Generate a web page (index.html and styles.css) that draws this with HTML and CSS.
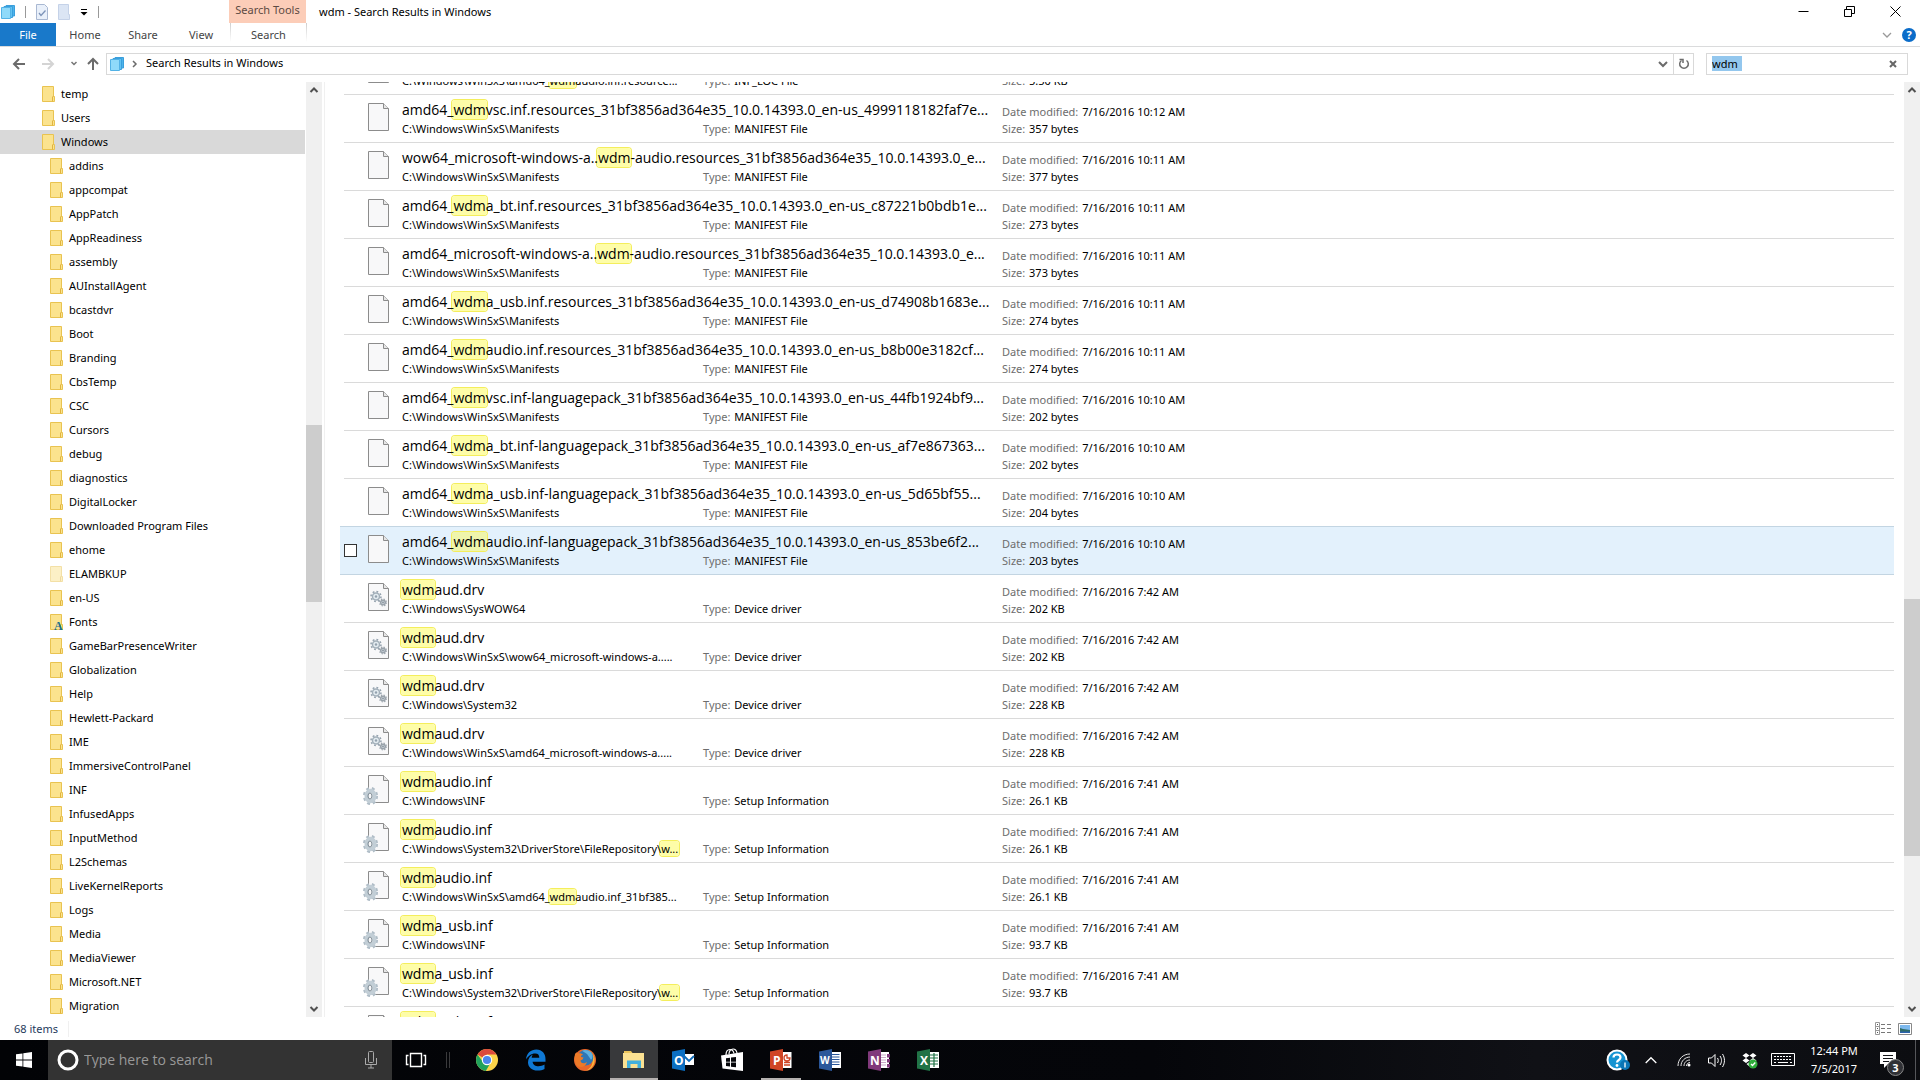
FILE: index.html
```html
<!DOCTYPE html>
<html lang="en">
<head>
    <meta charset="UTF-8">
    <meta name="viewport" content="width=device-width, initial-scale=1.0">
    <title>wdm - Search Results in Windows</title>
    <link rel="stylesheet" href="styles.css">
</head>
<body>
    <svg class="sprite" aria-hidden="true">
        <symbol id="folder" viewBox="0 0 13 16">
            <path d="M.5.5h11v10h1v5H.5z" fill="#fbe38e" stroke="#e9c350"/>
            <path d="M10.500 15.500v-4.500l1-1" fill="none" stroke="#e0b440"/>
        </symbol>
        <symbol id="results" viewBox="0 0 14 14">
            <path d="M5 .5h8.500v10.500H5z" fill="#4db4ea" stroke="#3a9fdc"/>
            <path d="M3 1.500h8.500v11H3z" fill="#62c3f2" stroke="#3a9fdc"/>
            <path d="M.500 2.500h9v11h-9z" fill="#8fdafa" stroke="#52b2e6"/>
        </symbol>
        <symbol id="file" viewBox="0 0 28 32">
            <path d="M6.500.5h15l5 5v22h-20z" fill="#f8f8f9" stroke="#8c8c8c"/>
            <path d="M21.500.5v5h5" fill="#e6e6e6" stroke="#8c8c8c"/>
        </symbol>
        <symbol id="driver" viewBox="0 0 28 32">
            <use href="#file"/>
            <circle cx="14" cy="13.500" r="3.500" fill="#e3ebf0" stroke="#a3b0ba" stroke-width="1.500"/>
            <circle cx="14" cy="13.500" r="5" fill="none" stroke="#93a1ad" stroke-width="1.500" stroke-dasharray="1.800 2.100"/>
            <circle cx="14" cy="13.500" r="1.200" fill="#93a1ad"/>
            <circle cx="21" cy="19.500" r="2.300" fill="#d5dde4" stroke="#9aa3ab" stroke-width="1.500"/>
            <circle cx="21" cy="19.500" r="3.400" fill="none" stroke="#9aa3ab" stroke-width="1.200" stroke-dasharray="1.300 1.400"/>
            <circle cx="21" cy="19.500" r=".9" fill="#87919a"/>
        </symbol>
        <symbol id="setup" viewBox="0 0 28 32">
            <use href="#file"/>
            <ellipse cx="8.500" cy="21" rx="6" ry="7.600" fill="none" stroke="#b0bdc7" stroke-width="3" stroke-dasharray="2.800 2.700"/>
            <ellipse cx="8.500" cy="21" rx="4" ry="5.200" fill="#fff" stroke="#c2ced6" stroke-width="4"/>
            <ellipse cx="8" cy="21" rx="2" ry="3" fill="#f8f8f9" stroke="#77858f"/>
        </symbol>
        <symbol id="up" viewBox="0 0 16 16"><path d="M4.500 10 8 6.500l3.500 3.500" fill="none" stroke="#505050" stroke-width="2"/></symbol>
        <symbol id="down" viewBox="0 0 16 16"><path d="M4.500 6 8 9.500 11.500 6" fill="none" stroke="#505050" stroke-width="2"/></symbol>
    </svg>

    <header class="titlebar">
        <div class="quick">
            <svg width="14" height="14"><use href="#results"/></svg>
            <span class="sep"></span>
            <button aria-label="Properties"><svg width="12" height="16" viewBox="0 0 12 16"><path d="M.5.5h8l3 3v12H.5z" fill="#e9f0fa" stroke="#a9b8d2"/><path d="m3 9 2 2.500 4.500-5" fill="none" stroke="#7d93b8" stroke-width="1.300"/></svg></button>
            <button aria-label="New folder"><svg width="12" height="16" viewBox="0 0 12 16"><path d="M.5.5h10v10h1v5H.5z" fill="#dbe5f4" stroke="#c5d2e8"/></svg></button>
            <button aria-label="Customize"><svg width="8" height="8" viewBox="0 0 8 8"><path d="M1 1.500h6" stroke="#000"/><path d="M.5 4h7L4 7.500z"/></svg></button>
            <span class="sep"></span>
        </div>
        <div class="context">Search Tools</div>
        <h1>wdm - Search Results in Windows</h1>
        <div class="window-buttons">
            <button aria-label="Minimize"><svg width="11" height="11" viewBox="0 0 11 11"><path d="M.5 5.500h10" stroke="#000"/></svg></button>
            <button aria-label="Restore"><svg width="11" height="11" viewBox="0 0 11 11"><path d="M.5 3.500h7v7h-7zM2.500 3V.5h8v7H8" fill="none" stroke="#000"/></svg></button>
            <button aria-label="Close"><svg width="11" height="11" viewBox="0 0 11 11"><path d="m.5.5 10 10m0-10-10 10" stroke="#000"/></svg></button>
        </div>
    </header>

    <nav class="tabs">
        <button class="file-tab">File</button>
        <button>Home</button>
        <button>Share</button>
        <button>View</button>
        <button class="search-tab">Search</button>
        <div class="tabs-right">
            <button aria-label="Expand the Ribbon"><svg width="10" height="10" viewBox="0 0 10 10"><path d="m1 3 4 4 4-4" fill="none" stroke="#999" stroke-width="1.300"/></svg></button>
            <button class="help" aria-label="Help">?</button>
        </div>
    </nav>

    <div class="navbar">
        <div class="arrows">
            <button aria-label="Back"><svg width="14" height="14" viewBox="0 0 14 14"><path d="M13 7H2m5-5L2 7l5 5" fill="none" stroke="#6b6b6b" stroke-width="2"/></svg></button>
            <button aria-label="Forward"><svg width="14" height="14" viewBox="0 0 14 14"><path d="M1 7h11M7 2l5 5-5 5" fill="none" stroke="#d4d4d4" stroke-width="2"/></svg></button>
            <button aria-label="Recent locations"><svg width="8" height="8" viewBox="0 0 8 8"><path d="m1.500 2 2.500 2.500L6.500 2" fill="none" stroke="#777" stroke-width="1.500"/></svg></button>
            <button aria-label="Up"><svg width="14" height="14" viewBox="0 0 14 14"><path d="M7 13V2M2 7l5-5 5 5" fill="none" stroke="#6b6b6b" stroke-width="2"/></svg></button>
        </div>
        <div class="address">
            <svg width="14" height="14"><use href="#results"/></svg>
            <svg class="crumb-arrow" width="6" height="8" viewBox="0 0 6 8"><path d="m1 1 3 3-3 3" fill="none" stroke="#6b6b6b" stroke-width="1.500"/></svg>
            <button class="crumb">Search Results in Windows</button>
            <button class="history" aria-label="Previous locations"><svg width="10" height="10" viewBox="0 0 10 10"><path d="m1 3 4 4 4-4" fill="none" stroke="#6b6b6b" stroke-width="2"/></svg></button>
            <button class="refresh" aria-label="Refresh"><svg width="12" height="12" viewBox="0 0 12 12"><path d="M3.500 2.500A4.300 4.300 0 1 0 8.500 2.500" fill="none" stroke="#6b6b6b" stroke-width="1.500"/><path d="M1.500 1.500h3.500V5" fill="none" stroke="#6b6b6b" stroke-width="1.500"/></svg></button>
        </div>
        <div class="search-box">
            <input type="text" value="wdm" aria-label="Search Windows">
            <button aria-label="Clear"><svg width="8" height="8" viewBox="0 0 8 8"><path d="m1 1 6 6m0-6L1 7" stroke="#666" stroke-width="2"/></svg></button>
        </div>
    </div>

    <main class="panes">
        <ul class="tree">
            <li class="top"><svg><use href="#folder"/></svg>temp</li>
            <li class="top"><svg><use href="#folder"/></svg>Users</li>
            <li class="top current"><svg><use href="#folder"/></svg>Windows</li>
            <li><svg><use href="#folder"/></svg>addins</li>
            <li><svg><use href="#folder"/></svg>appcompat</li>
            <li><svg><use href="#folder"/></svg>AppPatch</li>
            <li><svg><use href="#folder"/></svg>AppReadiness</li>
            <li><svg><use href="#folder"/></svg>assembly</li>
            <li><svg><use href="#folder"/></svg>AUInstallAgent</li>
            <li><svg><use href="#folder"/></svg>bcastdvr</li>
            <li><svg><use href="#folder"/></svg>Boot</li>
            <li><svg><use href="#folder"/></svg>Branding</li>
            <li><svg><use href="#folder"/></svg>CbsTemp</li>
            <li><svg><use href="#folder"/></svg>CSC</li>
            <li><svg><use href="#folder"/></svg>Cursors</li>
            <li><svg><use href="#folder"/></svg>debug</li>
            <li><svg><use href="#folder"/></svg>diagnostics</li>
            <li><svg><use href="#folder"/></svg>DigitalLocker</li>
            <li><svg><use href="#folder"/></svg>Downloaded Program Files</li>
            <li><svg><use href="#folder"/></svg>ehome</li>
            <li class="hidden-folder"><svg><use href="#folder"/></svg>ELAMBKUP</li>
            <li><svg><use href="#folder"/></svg>en-US</li>
            <li><svg><use href="#folder"/><text class="font-mark" x="4" y="16">A</text></svg>Fonts</li>
            <li><svg><use href="#folder"/></svg>GameBarPresenceWriter</li>
            <li><svg><use href="#folder"/></svg>Globalization</li>
            <li><svg><use href="#folder"/></svg>Help</li>
            <li><svg><use href="#folder"/></svg>Hewlett-Packard</li>
            <li><svg><use href="#folder"/></svg>IME</li>
            <li><svg><use href="#folder"/></svg>ImmersiveControlPanel</li>
            <li><svg><use href="#folder"/></svg>INF</li>
            <li><svg><use href="#folder"/></svg>InfusedApps</li>
            <li><svg><use href="#folder"/></svg>InputMethod</li>
            <li><svg><use href="#folder"/></svg>L2Schemas</li>
            <li><svg><use href="#folder"/></svg>LiveKernelReports</li>
            <li><svg><use href="#folder"/></svg>Logs</li>
            <li><svg><use href="#folder"/></svg>Media</li>
            <li><svg><use href="#folder"/></svg>MediaViewer</li>
            <li><svg><use href="#folder"/></svg>Microsoft.NET</li>
            <li><svg><use href="#folder"/></svg>Migration</li>
        </ul>
        <div class="scrollbar tree-scroll">
            <svg><use href="#up"/></svg>
            <div class="track"><div class="thumb"></div></div>
            <svg><use href="#down"/></svg>
        </div>

        <ul class="results">
            <li>
                <svg><use href="#file"/></svg>
                <div class="info"><b>amd64_<mark>wdm</mark>audio.inf.resources</b><p>C:\Windows\WinSxS\amd64_<mark>wdm</mark>audio.inf.resource...</p><p><i>Type:</i> INF_LOC File</p></div>
                <div class="meta"><p><i>Date modified:</i> 7/16/2016 10:12 AM</p><p><i>Size:</i> 5.50 KB</p></div>
            </li>
            <li>
                <svg><use href="#file"/></svg>
                <div class="info"><b>amd64_<mark>wdm</mark>vsc.inf.resources_31bf3856ad364e35_10.0.14393.0_en-us_4999118182faf7e...</b><p>C:\Windows\WinSxS\Manifests</p><p><i>Type:</i> MANIFEST File</p></div>
                <div class="meta"><p><i>Date modified:</i> 7/16/2016 10:12 AM</p><p><i>Size:</i> 357 bytes</p></div>
            </li>
            <li>
                <svg><use href="#file"/></svg>
                <div class="info"><b>wow64_microsoft-windows-a..<mark>wdm</mark>-audio.resources_31bf3856ad364e35_10.0.14393.0_e...</b><p>C:\Windows\WinSxS\Manifests</p><p><i>Type:</i> MANIFEST File</p></div>
                <div class="meta"><p><i>Date modified:</i> 7/16/2016 10:11 AM</p><p><i>Size:</i> 377 bytes</p></div>
            </li>
            <li>
                <svg><use href="#file"/></svg>
                <div class="info"><b>amd64_<mark>wdm</mark>a_bt.inf.resources_31bf3856ad364e35_10.0.14393.0_en-us_c87221b0bdb1e...</b><p>C:\Windows\WinSxS\Manifests</p><p><i>Type:</i> MANIFEST File</p></div>
                <div class="meta"><p><i>Date modified:</i> 7/16/2016 10:11 AM</p><p><i>Size:</i> 273 bytes</p></div>
            </li>
            <li>
                <svg><use href="#file"/></svg>
                <div class="info"><b>amd64_microsoft-windows-a..<mark>wdm</mark>-audio.resources_31bf3856ad364e35_10.0.14393.0_e...</b><p>C:\Windows\WinSxS\Manifests</p><p><i>Type:</i> MANIFEST File</p></div>
                <div class="meta"><p><i>Date modified:</i> 7/16/2016 10:11 AM</p><p><i>Size:</i> 373 bytes</p></div>
            </li>
            <li>
                <svg><use href="#file"/></svg>
                <div class="info"><b>amd64_<mark>wdm</mark>a_usb.inf.resources_31bf3856ad364e35_10.0.14393.0_en-us_d74908b1683e...</b><p>C:\Windows\WinSxS\Manifests</p><p><i>Type:</i> MANIFEST File</p></div>
                <div class="meta"><p><i>Date modified:</i> 7/16/2016 10:11 AM</p><p><i>Size:</i> 274 bytes</p></div>
            </li>
            <li>
                <svg><use href="#file"/></svg>
                <div class="info"><b>amd64_<mark>wdm</mark>audio.inf.resources_31bf3856ad364e35_10.0.14393.0_en-us_b8b00e3182cf...</b><p>C:\Windows\WinSxS\Manifests</p><p><i>Type:</i> MANIFEST File</p></div>
                <div class="meta"><p><i>Date modified:</i> 7/16/2016 10:11 AM</p><p><i>Size:</i> 274 bytes</p></div>
            </li>
            <li>
                <svg><use href="#file"/></svg>
                <div class="info"><b>amd64_<mark>wdm</mark>vsc.inf-languagepack_31bf3856ad364e35_10.0.14393.0_en-us_44fb1924bf9...</b><p>C:\Windows\WinSxS\Manifests</p><p><i>Type:</i> MANIFEST File</p></div>
                <div class="meta"><p><i>Date modified:</i> 7/16/2016 10:10 AM</p><p><i>Size:</i> 202 bytes</p></div>
            </li>
            <li>
                <svg><use href="#file"/></svg>
                <div class="info"><b>amd64_<mark>wdm</mark>a_bt.inf-languagepack_31bf3856ad364e35_10.0.14393.0_en-us_af7e867363...</b><p>C:\Windows\WinSxS\Manifests</p><p><i>Type:</i> MANIFEST File</p></div>
                <div class="meta"><p><i>Date modified:</i> 7/16/2016 10:10 AM</p><p><i>Size:</i> 202 bytes</p></div>
            </li>
            <li>
                <svg><use href="#file"/></svg>
                <div class="info"><b>amd64_<mark>wdm</mark>a_usb.inf-languagepack_31bf3856ad364e35_10.0.14393.0_en-us_5d65bf55...</b><p>C:\Windows\WinSxS\Manifests</p><p><i>Type:</i> MANIFEST File</p></div>
                <div class="meta"><p><i>Date modified:</i> 7/16/2016 10:10 AM</p><p><i>Size:</i> 204 bytes</p></div>
            </li>
            <li class="hover">
                <input type="checkbox" aria-label="Select item">
                <svg><use href="#file"/></svg>
                <div class="info"><b>amd64_<mark>wdm</mark>audio.inf-languagepack_31bf3856ad364e35_10.0.14393.0_en-us_853be6f2...</b><p>C:\Windows\WinSxS\Manifests</p><p><i>Type:</i> MANIFEST File</p></div>
                <div class="meta"><p><i>Date modified:</i> 7/16/2016 10:10 AM</p><p><i>Size:</i> 203 bytes</p></div>
            </li>
            <li>
                <svg><use href="#driver"/></svg>
                <div class="info"><b><mark>wdm</mark>aud.drv</b><p>C:\Windows\SysWOW64</p><p><i>Type:</i> Device driver</p></div>
                <div class="meta"><p><i>Date modified:</i> 7/16/2016 7:42 AM</p><p><i>Size:</i> 202 KB</p></div>
            </li>
            <li>
                <svg><use href="#driver"/></svg>
                <div class="info"><b><mark>wdm</mark>aud.drv</b><p>C:\Windows\WinSxS\wow64_microsoft-windows-a.....</p><p><i>Type:</i> Device driver</p></div>
                <div class="meta"><p><i>Date modified:</i> 7/16/2016 7:42 AM</p><p><i>Size:</i> 202 KB</p></div>
            </li>
            <li>
                <svg><use href="#driver"/></svg>
                <div class="info"><b><mark>wdm</mark>aud.drv</b><p>C:\Windows\System32</p><p><i>Type:</i> Device driver</p></div>
                <div class="meta"><p><i>Date modified:</i> 7/16/2016 7:42 AM</p><p><i>Size:</i> 228 KB</p></div>
            </li>
            <li>
                <svg><use href="#driver"/></svg>
                <div class="info"><b><mark>wdm</mark>aud.drv</b><p>C:\Windows\WinSxS\amd64_microsoft-windows-a.....</p><p><i>Type:</i> Device driver</p></div>
                <div class="meta"><p><i>Date modified:</i> 7/16/2016 7:42 AM</p><p><i>Size:</i> 228 KB</p></div>
            </li>
            <li>
                <svg><use href="#setup"/></svg>
                <div class="info"><b><mark>wdm</mark>audio.inf</b><p>C:\Windows\INF</p><p><i>Type:</i> Setup Information</p></div>
                <div class="meta"><p><i>Date modified:</i> 7/16/2016 7:41 AM</p><p><i>Size:</i> 26.1 KB</p></div>
            </li>
            <li>
                <svg><use href="#setup"/></svg>
                <div class="info"><b><mark>wdm</mark>audio.inf</b><p>C:\Windows\System32\DriverStore\FileRepository\<mark>w...</mark></p><p><i>Type:</i> Setup Information</p></div>
                <div class="meta"><p><i>Date modified:</i> 7/16/2016 7:41 AM</p><p><i>Size:</i> 26.1 KB</p></div>
            </li>
            <li>
                <svg><use href="#setup"/></svg>
                <div class="info"><b><mark>wdm</mark>audio.inf</b><p>C:\Windows\WinSxS\amd64_<mark>wdm</mark>audio.inf_31bf385...</p><p><i>Type:</i> Setup Information</p></div>
                <div class="meta"><p><i>Date modified:</i> 7/16/2016 7:41 AM</p><p><i>Size:</i> 26.1 KB</p></div>
            </li>
            <li>
                <svg><use href="#setup"/></svg>
                <div class="info"><b><mark>wdm</mark>a_usb.inf</b><p>C:\Windows\INF</p><p><i>Type:</i> Setup Information</p></div>
                <div class="meta"><p><i>Date modified:</i> 7/16/2016 7:41 AM</p><p><i>Size:</i> 93.7 KB</p></div>
            </li>
            <li>
                <svg><use href="#setup"/></svg>
                <div class="info"><b><mark>wdm</mark>a_usb.inf</b><p>C:\Windows\System32\DriverStore\FileRepository\<mark>w...</mark></p><p><i>Type:</i> Setup Information</p></div>
                <div class="meta"><p><i>Date modified:</i> 7/16/2016 7:41 AM</p><p><i>Size:</i> 93.7 KB</p></div>
            </li>
            <li>
                <svg><use href="#setup"/></svg>
                <div class="info"><b><mark>wdm</mark>audio.inf</b></div>
            </li>
        </ul>
        <div class="scrollbar list-scroll">
            <svg><use href="#up"/></svg>
            <div class="track"><div class="thumb"></div></div>
            <svg><use href="#down"/></svg>
        </div>
    </main>

    <footer class="statusbar">
        <span class="count">68 items</span>
        <div class="views">
            <button aria-label="Details"><svg width="16" height="13" viewBox="0 0 16 13"><path d="M.5.5h4v12h-4zM.5 4.500h4m-4 4h4" fill="none" stroke="#999"/><path d="M2 2.500h1m-1 4h1m-1 4h1" stroke="#555"/><path d="M6 2.500h4m2 0h4m-10 4h4m2 0h4m-10 4h4m2 0h4" stroke="#777"/></svg></button>
            <button aria-label="Large icons"><svg width="14" height="12" viewBox="0 0 14 12"><path d="M.5.5h13v11H.5z" fill="#fff" stroke="#888"/><path d="M2 2h10v8H2z" fill="#7db9ee"/><path d="m2 5 3 1 7 1v3H2z" fill="#2f6b66"/><path d="M2 8.500h10V10H2z" fill="#2b62ad"/></svg></button>
        </div>
    </footer>

    <div class="taskbar">
        <button class="start" aria-label="Start"><svg width="16" height="16" viewBox="0 0 16 16"><path d="m0 2.300 6.500-.9v6.200H0zm7.300-1L16 0v7.600H7.300zM0 8.400h6.500v6.200L0 13.700zm7.300 0H16V16l-8.700-1.200z" fill="#fff"/></svg></button>
        <div class="cortana">
            <svg width="22" height="22" viewBox="0 0 22 22"><circle cx="11" cy="11" r="9" fill="none" stroke="#fff" stroke-width="3"/></svg>
            <input type="text" placeholder="Type here to search" aria-label="Type here to search">
            <button aria-label="Microphone"><svg width="12" height="18" viewBox="0 0 12 18"><rect x="3.500" y=".5" width="5" height="11" rx="1" fill="none" stroke="#aaa"/><path d="M.500 7v6.500h11V7M6 14v3M3 17h6" fill="none" stroke="#aaa"/></svg></button>
        </div>
        <button class="task-view" aria-label="Task View"><svg width="22" height="16" viewBox="0 0 22 16"><path d="M5.500 1.500h11v13h-11zM3.500 3.500h-2v9h2m15-9h2v9h-2" fill="none" stroke="#fff" stroke-width="1.400"/></svg></button>
        <span class="grip"></span>
        <div class="apps">
            <button aria-label="Chrome"><svg width="22" height="22" viewBox="0 0 22 22"><circle cx="11" cy="11" r="11" fill="#fcd349"/><path d="M11 11 1.500 5.500a11 11 0 0 1 19 0H11z" fill="#dc4a3d"/><path d="M1.500 5.500a11 11 0 0 0 8.300 16.400L15 13H7z" fill="#20a25c"/><circle cx="11" cy="11" r="5.200" fill="#fff"/><circle cx="11" cy="11" r="4.100" fill="#4a86ee"/></svg></button>
            <button aria-label="Edge"><svg width="22" height="22" viewBox="0 0 22 22"><path d="M1 10.500C1.500 4 6 .5 11.300.5c6 0 9.200 4.300 9.200 9.500v2.700H7.600c.2 3.200 3 4.500 5.900 4.500 2.200 0 4.200-.6 6-1.600v4.300c-2 1-4.300 1.600-6.800 1.600-5.800 0-9.700-3.200-9.700-8.300 0-3.500 2-6.200 5-7.700-1 1-1.200 2.300-1.300 3.200h7.600c0-2.500-1.200-4.100-4-4.100C6 4.600 3 7.300 1 10.500z" fill="#0f78d4"/></svg></button>
            <button aria-label="Firefox"><svg width="22" height="22" viewBox="0 0 22 22"><circle cx="11" cy="11" r="11" fill="#e8672a"/><path d="M14 1a11 11 0 0 1-3 21c5-2 8-6 7.500-11C18.300 7 17 4 14 1z" fill="#f9b83a"/><circle cx="11.500" cy="8.800" r="7.800" fill="#2f77b5"/><path d="M8 1.700c4-1.500 8 0 10 3 1 2 .5 5-1 6L13 5z" fill="#5fb0de"/><path d="M1 5c1.500-2 2-2 3-.5 2-.8 4 0 5 1-1.500.5-2 1.500-2 2.500l2.500.5-1 2-2 1c0 2.500 3 4 6.500 1.500-1 4-5 6-9 4.500C1 15.500 0 10 1 5z" fill="#ec7a28"/></svg></button>
            <button class="open active" aria-label="File Explorer"><svg width="22" height="20" viewBox="0 0 22 20"><path d="M1 1h7l1.500 2H20v4H1z" fill="#ecc55b"/><path d="M0 3h21v15H0z" fill="#fbe192"/><path d="M4 10.500h14V18h-3.500v-4h-7v4H4z" fill="#43b0dc"/></svg></button>
            <button aria-label="Outlook"><svg width="24" height="24" viewBox="0 0 24 24"><path d="M12 6h11v11H12z" fill="#fff"/><path d="m13 8 5 5 5-5" fill="none" stroke="#0d6ab8" stroke-width="1.800"/><path d="M1 3.500 14 1v22L1 20.500z" fill="#0b6fc2"/><text x="3" y="17">O</text></svg></button>
            <button aria-label="Store"><svg width="22" height="24" viewBox="0 0 22 24"><path d="M0 7.500 22 4v19L1.500 20.500z" fill="#fff"/><path d="M5 7c0-3 1.500-5.500 4-5.500 2 0 3.500 1.500 4 4M8 6c0-3 2-5 4-5s3.500 1.500 4 4" fill="none" stroke="#fff" stroke-width="1.200"/><path d="m5 10.300 4-.6v4H5zm5-.7 5-.7v4.800h-5zM5 14.600h4v4l-4-.5zm5 0h5v4.700l-5-.6z" fill="#05060a"/></svg></button>
            <button class="open" aria-label="PowerPoint"><svg width="24" height="24" viewBox="0 0 24 24"><path d="M12 4h10.500v16H12z" fill="#fff"/><path d="M18 7a3 3 0 1 0 3 3h-3zM15 14.500h6m-6 2.500h6" fill="none" stroke="#d04525" stroke-width="1.300"/><path d="M1 3.500 14 1v22L1 20.500z" fill="#d04525"/><text x="4" y="17">P</text></svg></button>
            <button aria-label="Word"><svg width="24" height="24" viewBox="0 0 24 24"><path d="M12 4h11v16H12z" fill="#fff"/><path d="M14 6.500h7.500M14 9h7.500M14 11.500h7.500M14 14h7.500m-7.500 2.500h7.500" stroke="#2b579a" stroke-width="1.200"/><path d="M1 3.500 14 1v22L1 20.500z" fill="#2b579a"/><text class="wide" x="2" y="16">W</text></svg></button>
            <button aria-label="OneNote"><svg width="24" height="24" viewBox="0 0 24 24"><path d="M12 4h10v16H12z" fill="#fff"/><path d="M20 6h3v3.500h-3zm0 5h3v3.500h-3zm0 5h3v3.500h-3z" fill="#80397b"/><path d="M14 7h5m-5 2.500h5M14 12h5m-5 2.500h5M14 17h5" stroke="#c9a9c7"/><path d="M1 3.500 14 1v22L1 20.500z" fill="#80397b"/><text x="3" y="17">N</text></svg></button>
            <button aria-label="Excel"><svg width="24" height="24" viewBox="0 0 24 24"><path d="M12 4h11v16H12z" fill="#fff"/><path d="M14 7h8m-8 3h8m-8 3h8m-8 3h8M18 5v14" stroke="#217346" stroke-width="1.200"/><path d="M1 3.500 14 1v22L1 20.500z" fill="#217346"/><text x="4" y="17">X</text></svg></button>
        </div>
        <div class="tray">
            <button aria-label="Support Assistant"><svg width="24" height="24" viewBox="0 0 24 24"><circle cx="11" cy="12" r="9.500" fill="#1694d2" stroke="#fff" stroke-width="2"/><path d="M7.500 9.500C7.500 7.500 9 6.500 11 6.500s3.500 1 3.500 3c0 2.500-3.500 2.500-3.500 5" fill="none" stroke="#fff" stroke-width="2.200"/><circle cx="11" cy="17.500" r="1.400" fill="#fff"/><circle cx="19" cy="17" r="5" fill="#0b75b5"/><path d="M19 14.500v5" stroke="#fff" stroke-width="1.300"/></svg></button>
            <button aria-label="Show hidden icons"><svg width="12" height="8" viewBox="0 0 12 8"><path d="m.7 7 5.300-5.300L11.300 7" fill="none" stroke="#fff" stroke-width="1.300"/></svg></button>
            <button aria-label="Network"><svg width="14" height="14" viewBox="0 0 14 14"><g fill="none" stroke="#e5e5e5"><path d="M1 13C1 6 6 1 13 1M4 13c0-5 4-9 9-9M7 13c0-3.500 2.500-6 6-6"/><path d="M9.500 13c0-2 1.500-3.500 3.500-3.500"/></g><circle cx="12" cy="12" r="1.500" fill="#fff"/></svg></button>
            <button aria-label="Volume"><svg width="17" height="15" viewBox="0 0 17 15"><path d="M.5 5h3L7 1.500v12L3.500 10h-3zM9.500 5c1 1.500 1 3.500 0 5m2.500-7c2 3 2 6 0 9m2.500-11c2.600 4 2.600 9 0 13" fill="none" stroke="#fff"/></svg></button>
            <button aria-label="Dropbox"><svg width="16" height="17" viewBox="0 0 16 17"><path d="m4 1 3.500 2.500L4 6 .5 3.500zm7 0 3.500 2.500L11 6 7.500 3.500zM4 6l3.500 2.500L4 11 .5 8.500zm7 0 3.500 2.500L11 11 7.500 8.500zm-3.500 4 3 2-3 2.500-3-2.500z" fill="#fff"/><circle cx="11" cy="12" r="4.500" fill="#2fae3a"/><path d="m9 12 1.500 1.500 2.800-3" fill="none" stroke="#fff" stroke-width="1.300"/></svg></button>
            <button aria-label="Touch keyboard"><svg width="24" height="14" viewBox="0 0 24 14"><path d="M.5.5h23v12H.5z" fill="none" stroke="#fff"/><path d="M3 3.500h18M3 6.500h18" stroke="#fff" stroke-dasharray="2 1"/><path d="M3 9.500h2m2 0h10m2 0h2" stroke="#fff"/></svg></button>
            <button class="clock"><span>12:44 PM</span><span>7/5/2017</span></button>
            <button class="action" aria-label="Action Center"><svg width="16" height="16" viewBox="0 0 16 16"><path d="M0 0h16v12H8l-4 4v-4H0z" fill="#fff"/><path d="M3 3.500h10M3 6.500h10M3 9.500h6" stroke="#14151a"/></svg><span class="badge">3</span></button>
        </div>
    </div>
</body>
</html>
```

FILE: styles.css
```css
* {
    box-sizing: border-box;
}
body {
    margin: 0;
    height: 100vh;
    display: flex;
    flex-direction: column;
    overflow: hidden;
    background: #fff;
    color: #000;
    font-family: "Noto Sans", "Open Sans", sans-serif;
    font-size: 11px;
    line-height: 16px;
}
button, input {
    font: inherit;
    color: inherit;
    background: none;
    border: none;
    padding: 0;
    margin: 0;
    outline: none;
}
button {
    display: flex;
    align-items: center;
    justify-content: center;
}
ul, p, h1 {
    margin: 0;
    padding: 0;
    list-style: none;
    font-size: inherit;
    font-weight: normal;
}
b, i {
    font-weight: normal;
    font-style: normal;
}
svg {
    display: block;
    flex: none;
}
.sprite {
    position: absolute;
    width: 0;
    height: 0;
}

/* title bar */
.titlebar {
    display: flex;
    height: 23px;
    flex: none;
}
.quick {
    width: 229px;
    display: flex;
    align-items: center;
    gap: 10px;
    padding-left: 1px;
}
.sep {
    width: 1px;
    height: 12px;
    background: #999;
}
.context {
    width: 77px;
    background: #fccdb8;
    color: #5c4a42;
    text-align: center;
    line-height: 20px;
}
.titlebar h1 {
    flex: 1;
    padding-left: 13px;
    line-height: 23px;
}
.window-buttons {
    display: flex;
    align-items: center;
    padding-right: 2px;
}
.window-buttons button {
    width: 46px;
    height: 20px;
}

/* ribbon tabs */
.tabs {
    display: flex;
    height: 24px;
    flex: none;
    border-bottom: 1px solid #dadbdc;
    color: #444;
}
.tabs > button {
    width: 58px;
}
.tabs .file-tab {
    width: 56px;
    background: #1979ca;
    color: #fff;
}
.tabs .search-tab {
    width: 77px;
    border: 1px solid;
    border-width: 0 1px;
    border-image: linear-gradient(#ccc, #fff 80%) 1;
}
.tabs-right {
    display: flex;
    align-items: center;
    gap: 10px;
    margin-left: auto;
    padding-right: 4px;
}
.help {
    width: 14px;
    height: 14px;
    border-radius: 50%;
    background: #0a6cc9;
    color: #fff;
    font-weight: bold;
}

/* address row */
.navbar {
    display: flex;
    align-items: flex-start;
    height: 35px;
    flex: none;
    padding: 6px 12px 0 0;
}
.arrows {
    width: 106px;
    height: 22px;
    display: flex;
    align-items: center;
    gap: 15px;
    padding-left: 12px;
}
.arrows button:last-child {
    margin-left: -7px;
}
.address {
    flex: 1;
    display: flex;
    align-items: center;
    height: 22px;
    border: 1px solid #d9d9d9;
    padding-left: 3px;
    margin-right: 12px;
}
.crumb-arrow {
    margin: 0 8px;
}
.crumb {
    padding-bottom: 2px;
}
.history {
    width: 20px;
    height: 20px;
    margin-left: auto;
}
.refresh {
    width: 20px;
    height: 20px;
    border-left: 1px solid #d9d9d9;
}
.search-box {
    display: flex;
    width: 202px;
    height: 22px;
    border: 1px solid #d9d9d9;
    padding: 0 10px 0 5px;
}
.search-box input {
    flex: 1;
    min-width: 0;
    font-size: 11px;
    background: linear-gradient(#93c7ee, #93c7ee) no-repeat 0 2px / 30px 15px;
}

/* panes */
.panes {
    flex: 1;
    min-height: 0;
    display: flex;
}
.tree {
    width: 305px;
    overflow: hidden;
}
.tree li {
    display: flex;
    align-items: center;
    gap: 6px;
    height: 24px;
    padding-left: 50px;
}
.tree svg {
    width: 13px;
    height: 16px;
    overflow: visible;
}
.tree .top {
    padding-left: 42px;
}
.tree .current {
    background: #d9d9d9;
}
.hidden-folder svg {
    opacity: 0.5;
}
.font-mark {
    font: bold 12px "Liberation Serif", serif;
    fill: #1c6f8c;
}
.scrollbar {
    width: 16px;
    display: flex;
    flex-direction: column;
    flex: none;
    background: #f0f0f0;
}
.scrollbar svg {
    width: 16px;
    height: 16px;
}
.track {
    flex: 1;
    display: flex;
    flex-direction: column;
}
.thumb {
    background: #cdcdcd;
}
.tree-scroll {
    margin-left: 1px;
}
.tree-scroll .thumb {
    margin-top: 327px;
    height: 177px;
}
.list-scroll .thumb {
    margin-top: 501px;
    height: 257px;
}

/* search results */
.results {
    flex: 1;
    overflow: hidden;
    margin-left: 2px;
    padding: 0 10px 0 16px;
    border-left: 1px solid #f0f0f0;
}
.results li:first-child {
    margin-top: -35px;
}
.results li {
    display: flex;
    height: 48px;
    margin-left: 3px;
    padding-left: 18px;
    border-bottom: 1px solid #dadada;
}
.results li > svg {
    width: 28px;
    height: 32px;
    margin: 8px 12px 0 0;
}
.results .hover {
    position: relative;
    margin-left: -1px;
    padding-left: 4px;
    background: #e3f1fc;
    border-bottom-color: #c3d5e2;
    box-shadow: 0 -1px #c3d5e2;
}
.hover input {
    appearance: none;
    width: 13px;
    height: 13px;
    margin: 17px 5px 0 0;
    border: 1px solid #333;
    background: #fff;
}
.info {
    position: relative;
    z-index: 0;
    width: 600px;
    display: grid;
    grid-template-columns: 301px 1fr;
    grid-template-rows: 23px 16px;
    padding-top: 3px;
    align-content: start;
    white-space: nowrap;
}
.info b {
    grid-column: 1 / 3;
    font-family: "Open Sans", sans-serif;
    font-size: 14px;
    line-height: 23px;
}
.meta {
    padding-top: 8px;
    white-space: nowrap;
}
.meta p {
    line-height: 17px;
}
.results i {
    color: #6d6d6d;
    margin-right: 1px;
}
/* sits behind the neighbouring letters */
mark {
    position: relative;
    z-index: -1;
    background: #fefda8;
    color: inherit;
    border-radius: 3px;
    box-shadow: 0 0 0 1px #f4ee5c;
    padding: 0 1px;
    margin: 0 -1px;
}
.hover mark {
    background: #eff5ac;
}

/* status bar */
.statusbar {
    display: flex;
    align-items: center;
    justify-content: space-between;
    height: 23px;
    flex: none;
    padding: 0 8px 0 14px;
    color: #1e395b;
}
.count {
    padding-right: 10px;
    border-right: 1px solid #f0f0f0;
}
.views {
    display: flex;
    gap: 7px;
}

/* taskbar */
.taskbar {
    display: flex;
    height: 40px;
    flex: none;
    background: linear-gradient(90deg, #020306, #05060a 60%, #101116 80%, #0c0d11);
    color: #fff;
}
.start {
    width: 48px;
}
.cortana {
    width: 344px;
    display: flex;
    align-items: center;
    gap: 5px;
    padding: 0 15px 0 9px;
    background: #333;
}
.cortana input {
    flex: 1;
    font-family: "Open Sans", sans-serif;
    font-size: 14px;
}
.cortana input::placeholder {
    color: #999;
    opacity: 1;
}
.task-view {
    width: 48px;
}
.grip {
    width: 4px;
    height: 16px;
    margin: 12px 13px 0 6px;
    border: 1px solid #3a3a3c;
    border-top: none;
    border-bottom: none;
}
.apps {
    display: flex;
    gap: 1px;
    margin-right: auto;
}
.apps button {
    position: relative;
    width: 48px;
}
.apps text {
    font: bold 12px "Open Sans", sans-serif;
    fill: #fff;
}
.apps .wide {
    font-size: 10px;
}
.apps .open::after {
    content: "";
    position: absolute;
    left: 4px;
    right: 4px;
    bottom: 0;
    height: 2px;
    background: #b5b1b0;
}
.apps .active {
    background: #38393b;
}
.apps .active::after {
    left: 0;
    right: 0;
}
.tray {
    display: flex;
    border-right: 1px solid #55565a;
    margin-right: 4px;
}
.tray button {
    width: 33px;
}
.tray .clock {
    width: 54px;
    margin-left: 8px;
    flex-direction: column;
    line-height: 18px;
}
.tray .action {
    position: relative;
    width: 54px;
}
.badge {
    position: absolute;
    left: 26px;
    top: 19px;
    width: 17px;
    height: 17px;
    border-radius: 50%;
    border: 1px solid #888;
    background: #303136;
    font-weight: bold;
    line-height: 15px;
}
```
